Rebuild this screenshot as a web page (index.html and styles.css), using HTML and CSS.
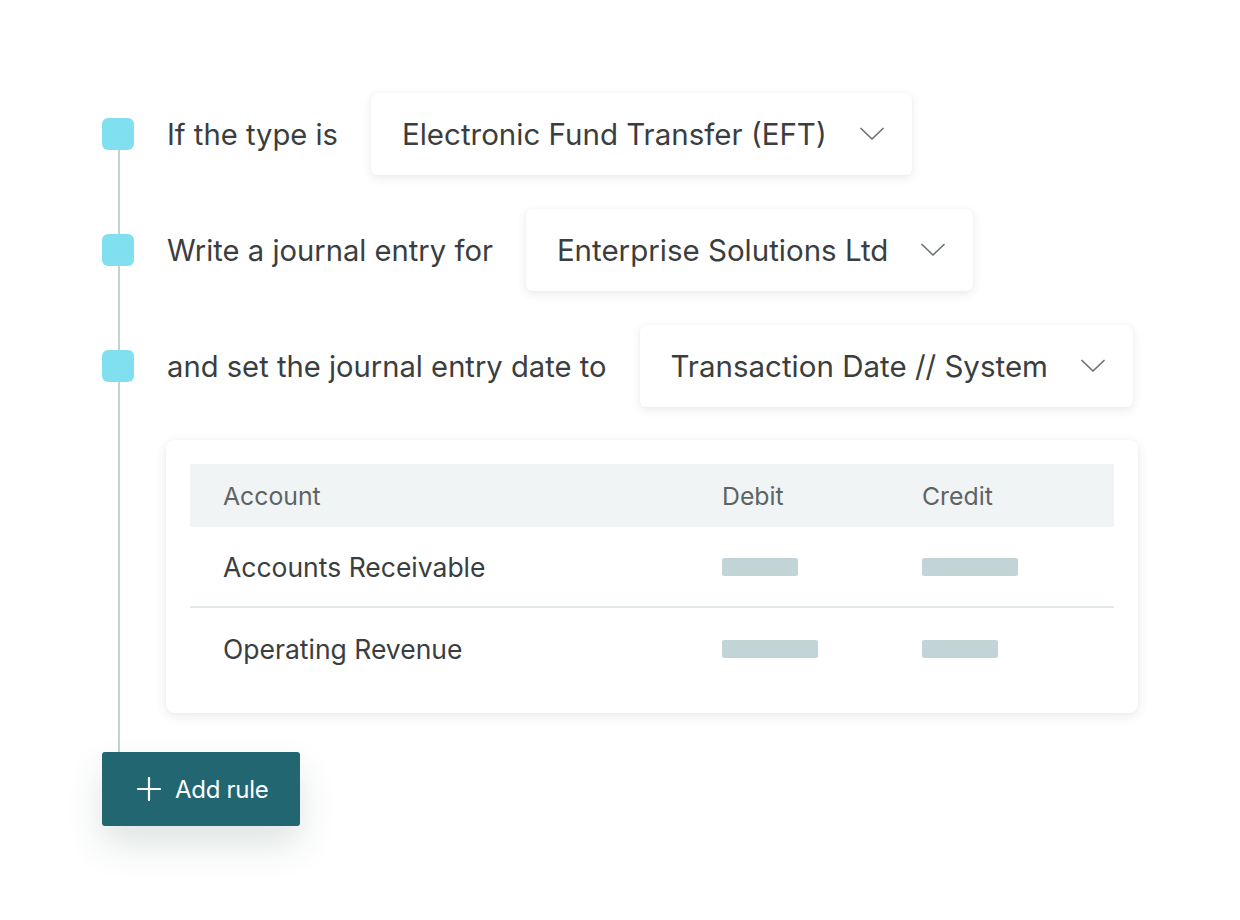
FILE: index.html
```html
<!DOCTYPE html>
<html>
<head>
<meta charset="utf-8">
<link rel="stylesheet" href="styles.css">
</head>
<body>
<div class="flow">
  <div class="line"></div>
  <div class="row">
    <span class="marker"></span>
    <span class="label">If the type is</span>
    <div class="select">
      <span class="select-text">Electronic Fund Transfer (EFT)</span>
      <svg class="chev" width="24" height="14" viewBox="0 0 24 14"><path d="M1 1.5 L12 12 L23 1.5" fill="none" stroke="#6d7373" stroke-width="1.7" stroke-linecap="round" stroke-linejoin="round"/></svg>
    </div>
  </div>
  <div class="row">
    <span class="marker"></span>
    <span class="label">Write a journal entry for</span>
    <div class="select">
      <span class="select-text">Enterprise Solutions Ltd</span>
      <svg class="chev" width="24" height="14" viewBox="0 0 24 14"><path d="M1 1.5 L12 12 L23 1.5" fill="none" stroke="#6d7373" stroke-width="1.7" stroke-linecap="round" stroke-linejoin="round"/></svg>
    </div>
  </div>
  <div class="row">
    <span class="marker"></span>
    <span class="label">and set the journal entry date to</span>
    <div class="select">
      <span class="select-text">Transaction Date // System</span>
      <svg class="chev" width="24" height="14" viewBox="0 0 24 14"><path d="M1 1.5 L12 12 L23 1.5" fill="none" stroke="#6d7373" stroke-width="1.7" stroke-linecap="round" stroke-linejoin="round"/></svg>
    </div>
  </div>
  <div class="card">
    <div class="table">
      <div class="thead">
        <span class="cell first">Account</span>
        <span class="cell">Debit</span>
        <span class="cell">Credit</span>
      </div>
      <div class="trow divided">
        <span class="cell first">Accounts Receivable</span>
        <span class="cell"><span class="bar short"></span></span>
        <span class="cell"><span class="bar long"></span></span>
      </div>
      <div class="trow">
        <span class="cell first">Operating Revenue</span>
        <span class="cell"><span class="bar long"></span></span>
        <span class="cell"><span class="bar short"></span></span>
      </div>
    </div>
  </div>
  <button class="add">
    <svg width="24" height="24" viewBox="0 0 24 24"><path d="M12 1 V23 M1 12 H23" stroke="#ffffff" stroke-width="2.2" stroke-linecap="round"/></svg>
    <span>Add rule</span>
  </button>
</div>
</body>
</html>
```

FILE: styles.css
```css
* { box-sizing: border-box; }
html, body {
  margin: 0;
  padding: 0;
  background: #ffffff;
}
body {
  font-family: Inter, "Noto Sans", sans-serif;
  color: #3a3e3e;
  width: 1240px;
  height: 920px;
  overflow: hidden;
}
.flow {
  position: relative;
  padding: 94px 0 0 102px;
  display: flex;
  flex-direction: column;
  align-items: flex-start;
}
.line {
  position: absolute;
  left: 118px;
  top: 140px;
  width: 2px;
  height: 614px;
  background: #c5d2d3;
}
.row {
  position: relative;
  display: flex;
  align-items: center;
  height: 80px;
  margin-bottom: 36px;
}
.marker {
  width: 32px;
  height: 32px;
  border-radius: 6px;
  background: #80e0ef;
  margin-right: 33px;
  flex: none;
}
.label {
  font-size: 29.2px;
  margin-right: 33px;
  white-space: nowrap;
}
.select {
  display: flex;
  align-items: center;
  height: 82px;
  padding: 0 28px 0 31px;
  background: #ffffff;
  border-radius: 6px;
  box-shadow: 0 3px 10px rgba(30, 50, 50, 0.10), 0 0 1px rgba(30, 50, 50, 0.08);
}
.select-text {
  font-size: 29.5px;
  white-space: nowrap;
  margin-right: 33px;
}
.chev { display: block; flex: none; }
.card {
  position: relative;
  margin: -2px 0 0 64px;
  width: 972px;
  padding: 24px;
  background: #ffffff;
  border-radius: 8px;
  box-shadow: 0 3px 12px rgba(30, 50, 50, 0.10), 0 0 1px rgba(30, 50, 50, 0.08);
}
.table { width: 924px; }
.thead, .trow {
  display: grid;
  grid-template-columns: 532px 200px 1fr;
  align-items: center;
}
.thead {
  height: 63px;
  background: #f0f4f5;
  color: #5e6464;
  font-size: 24.8px;
}
.trow {
  height: 81px;
  font-size: 26.5px;
  color: #3a3e3e;
}
.trow.divided { border-bottom: 2px solid #e3e8e8; }
.cell.first { padding-left: 33px; }
.bar {
  display: block;
  height: 18px;
  border-radius: 2px;
  background: #c3d4d6;
}
.bar.short { width: 76px; }
.bar.long { width: 96px; }
.add {
  position: relative;
  margin-top: 39px;
  width: 198px;
  height: 74px;
  display: flex;
  align-items: center;
  gap: 14px;
  padding: 0 0 0 35px;
  border: none;
  border-radius: 3px;
  background: #216670;
  color: #ffffff;
  font-family: Inter, "Noto Sans", sans-serif;
  font-size: 24px;
  letter-spacing: -0.3px;
  box-shadow: 0 18px 36px rgba(30, 60, 60, 0.14);
}
.add svg { display: block; }
```
